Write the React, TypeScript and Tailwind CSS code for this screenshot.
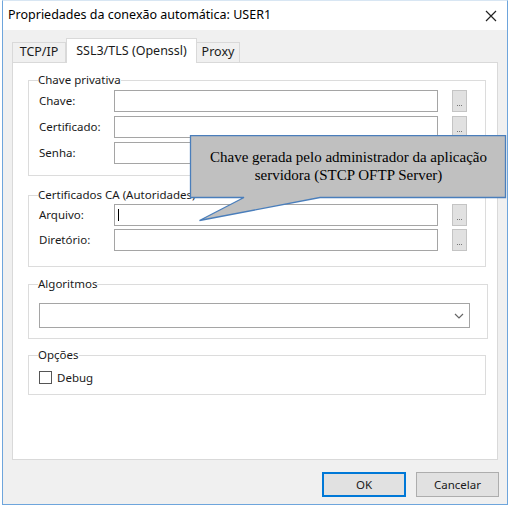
import React from "react";

const FONT = { fontFamily: '"Noto Sans", "Open Sans", sans-serif' };

function Field({ label, cursor }: { label: string; cursor?: boolean }) {
  return (
    <div className="flex items-center h-[22px]">
      <span className="w-[75px] shrink-0">{label}</span>
      <div className="relative w-[324px] h-[22px] bg-white border border-[#a5a5a5]">
        {cursor && <span className="absolute left-[3px] top-[4px] w-px h-[12px] bg-black" />}
      </div>
      {/* browse button */}
      <div className="ml-[14px] w-[15px] h-[22px] bg-[#e1e1e1] border border-[#c4c4c4] flex items-end justify-center gap-[1px] pb-[5px]">
        <span className="w-px h-px bg-[#777]" />
        <span className="w-px h-px bg-[#777]" />
        <span className="w-px h-px bg-[#777]" />
      </div>
    </div>
  );
}

function Group({
  title,
  className,
  children,
}: {
  title: string;
  className: string;
  children?: React.ReactNode;
}) {
  return (
    <fieldset className={`border border-[#dcdcdc] pl-[10px] pr-[17px] ${className}`}>
      <legend className="px-0 leading-[16px] -ml-[1px]">{title}</legend>
      {children}
    </fieldset>
  );
}

export default function App() {
  return (
    <div className="w-[512px] h-[506px] bg-white text-[11.5px] text-[#1a1a1a]" style={FONT}>
      <div className="relative w-[506px] h-[505px] ml-[2px] border border-[#6ea5dc] border-t-[#d8e6f3] bg-[#f0f0f0] flex flex-col">
        {/* Title bar */}
        <div className="h-[29px] bg-white flex items-center justify-between pl-[5px] pr-[10px]">
          <span className="text-[12.5px] text-black">Propriedades da conexão automática: USER1</span>
          <svg width="12" height="12" viewBox="0 0 12 12">
            <path d="M1 1L11 11M11 1L1 11" stroke="#222" strokeWidth="1.2" />
          </svg>
        </div>

        {/* Tabs */}
        <div className="flex items-end pl-[9px] mt-[8px] h-[24px] text-[12.5px]">
          <div className="w-[54px] h-[20px] border border-[#d9d9d9] border-b-0 bg-[#f0f0f0] flex items-center justify-center">
            TCP/IP
          </div>
          <div className="relative z-10 -mb-px w-[131px] h-[25px] border border-[#d9d9d9] border-b-0 bg-white flex items-center justify-center">
            SSL3/TLS (Openssl)
          </div>
          <div className="w-[43px] h-[20px] border border-[#d9d9d9] border-b-0 border-l-0 bg-[#f0f0f0] flex items-center justify-center">
            Proxy
          </div>
        </div>

        {/* Tab panel */}
        <div className="ml-[9px] w-[486px] h-[398px] bg-white border border-[#d9d9d9] pl-[15px] pr-[11px] pt-[9px] flex flex-col">
          <Group title="Chave privativa" className="pt-[2px] pb-[11px] flex flex-col gap-[4px]">
            <Field label="Chave:" />
            <Field label="Certificado:" />
            <Field label="Senha:" />
          </Group>

          <Group title="Certificados CA (Autoridades)" className="mt-[11px] pt-[1px] pb-[15px] flex flex-col gap-[3px]">
            <Field label="Arquivo:" cursor />
            <Field label="Diretório:" />
          </Group>

          <Group title="Algoritmos" className="mt-[9px] pt-[11px] pb-[10px]">
            <div className="w-[431px] h-[25px] bg-white border border-[#a5a5a5] flex items-center justify-end pr-[5px]">
              <svg width="10" height="6" viewBox="0 0 10 6">
                <path d="M1 1L5 5L9 1" stroke="#666" strokeWidth="1.2" fill="none" />
              </svg>
            </div>
          </Group>

          <Group title="Opções" className="mt-[8px] pt-[6px] pb-[8px]">
            <div className="flex items-center">
              <div className="w-[13px] h-[13px] border border-[#555] bg-white" />
              <span className="ml-[5px]">Debug</span>
            </div>
          </Group>
        </div>

        {/* Buttons */}
        <div className="flex justify-end gap-[10px] pr-[8px] mt-[12px]">
          <div className="w-[84px] h-[25px] bg-[#e1e1e1] border-2 border-[#0078d7] flex items-center justify-center">OK</div>
          <div className="w-[83px] h-[25px] bg-[#e1e1e1] border border-[#adadad] flex items-center justify-center">Cancelar</div>
        </div>

        {/* Callout */}
        <svg className="absolute left-[186px] top-[134px]" width="320" height="90" viewBox="0 0 320 90">
          <path
            d="M1.5 0.5H316.5V62.5H131L10.5 85.5L55 62.5H1.5Z"
            fill="#c0c0c0"
            stroke="#4a7ebb"
            strokeWidth="1.3"
          />
        </svg>
        <div
          className="absolute left-[188px] top-[147px] w-[315px] text-center text-[15px] leading-[18px] text-black"
          style={{ fontFamily: '"Liberation Serif", serif' }}
        >
          Chave gerada pelo administrador da aplicação
          <br />
          servidora (STCP OFTP Server)
        </div>
      </div>
    </div>
  );
}
